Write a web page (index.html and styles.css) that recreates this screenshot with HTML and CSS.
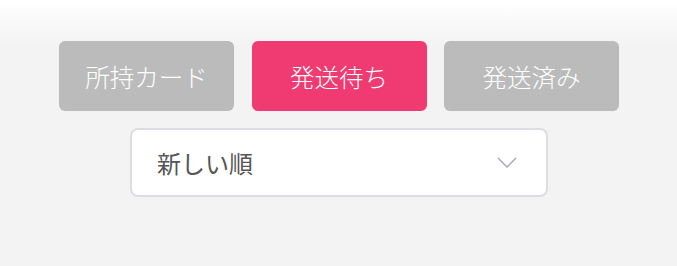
FILE: index.html
```html
<!DOCTYPE html>
<html lang="ja">
<head>
<meta charset="utf-8">
<link rel="stylesheet" href="styles.css">
</head>
<body>
<div class="page">
  <div class="tabs">
    <button class="tab">所持カード</button>
    <button class="tab active">発送待ち</button>
    <button class="tab">発送済み</button>
  </div>
  <div class="select">
    <span class="select-label">新しい順</span>
    <svg class="chevron" width="20" height="11" viewBox="0 0 20 11"><path d="M1 1 L10 10 L19 1" fill="none" stroke="#aaaab0" stroke-width="1.5"/></svg>
  </div>
</div>
</body>
</html>
```
FILE: styles.css
```css
html, body {
  margin: 0;
  padding: 0;
}
body {
  width: 677px;
  height: 266px;
  background: linear-gradient(#ffffff 0px, #f3f3f3 45px, #f3f3f3 100%);
  font-family: "Noto Sans CJK JP", "Noto Sans", sans-serif;
}
.page {
  display: flex;
  flex-direction: column;
  align-items: center;
  padding-top: 41px;
  padding-left: 1px;
  gap: 17px;
}
.tabs {
  display: flex;
  gap: 17.5px;
}
.tab {
  width: 175px;
  height: 70px;
  border: none;
  border-radius: 6px;
  background: #bbbbbb;
  color: #ffffff;
  font-family: inherit;
  font-size: 24.5px;
  font-weight: 300;
  padding: 0;
  display: flex;
  align-items: center;
  justify-content: center;
}
.tab.active {
  background: #f03a72;
}
.select {
  box-sizing: border-box;
  width: 418px;
  height: 69px;
  background: #ffffff;
  border: 2px solid #dcdce3;
  border-radius: 8px;
  display: flex;
  align-items: center;
  justify-content: space-between;
  padding: 0 29px 0 25px;
}
.select-label {
  font-size: 24px;
  color: #555555;
}
.chevron {
  display: block;
}
```
